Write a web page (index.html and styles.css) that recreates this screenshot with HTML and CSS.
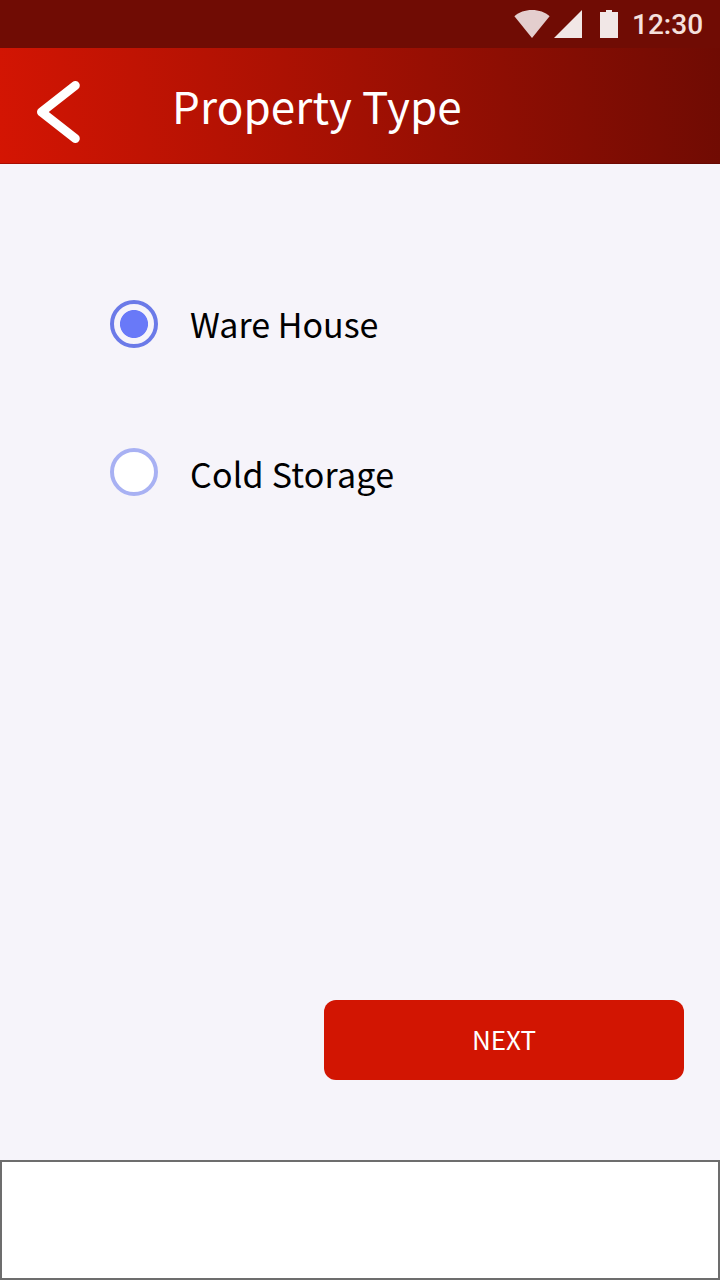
FILE: index.html
```
<!DOCTYPE html>
<html lang="en">
<head>
<meta charset="utf-8">
<title>Property Type</title>
<link rel="stylesheet" href="styles.css">
</head>
<body>
<div class="screen">
  <div class="status-bar">
    <svg class="status-icons" viewBox="0 0 106 48" aria-hidden="true">
      <path fill="#e4cece" d="M0.4 16.2C5 12.2 11 10 18 10s13 2.2 17.6 6.2L18 38z"/>
      <path fill="#f1e7e6" d="M40 38L68 10v28z"/>
      <path fill="#f1e7e6" d="M86 12h6v-2h6v2h6v26H86z"/>
    </svg>
    <span class="clock">12:30</span>
  </div>
  <header class="app-bar">
    <button class="back" aria-label="Back">
      <svg viewBox="0 0 48 68" aria-hidden="true"><path d="M41.3 7.5L7.5 34l33.8 26.5"/></svg>
    </button>
    <h1 class="title">Property Type</h1>
  </header>
  <main class="content">
    <label class="option">
      <span class="radio radio-checked"></span>
      <span class="option-label">Ware House</span>
    </label>
    <label class="option">
      <span class="radio"></span>
      <span class="option-label option-label-second">Cold Storage</span>
    </label>
    <button class="next">NEXT</button>
  </main>
  <footer class="bottom-bar"></footer>
</div>
</body>
</html>
```
FILE: styles.css
```
* { box-sizing: border-box; }
body { margin: 0; font-family: "Noto Sans CJK SC", "Noto Sans", sans-serif; }
button { border: 0; padding: 0; font-family: inherit; }
.screen {
  display: flex;
  flex-direction: column;
  width: 720px;
  height: 1280px;
  background: #f6f4fa;
}
.status-bar {
  display: flex;
  justify-content: flex-end;
  align-items: center;
  height: 48px;
  padding-right: 17px;
  background: #700c04;
}
.status-icons { width: 106px; height: 48px; margin-right: 12px; }
.clock {
  width: 71px;
  padding-top: 2px;
  font: 500 28px/48px Roboto, sans-serif;
  color: #f5e0dd;
  white-space: nowrap;
}
.app-bar {
  display: flex;
  height: 116px;
  padding-left: 34px;
  background: linear-gradient(83deg, #d41503 0%, #6f0b03 100%);
  border-bottom: 1px solid rgba(80, 0, 0, 0.3);
}
.back { width: 48px; height: 68px; margin-top: 30px; background: none; }
.back svg { display: block; width: 48px; height: 68px; }
.back path {
  fill: none;
  stroke: #fff;
  stroke-width: 9;
  stroke-linecap: round;
  stroke-linejoin: round;
}
.title {
  margin: 24px 0 0 90px;
  font-size: 44px;
  font-weight: 400;
  line-height: 66px;
  letter-spacing: 0.1px;
  color: #fff;
  white-space: nowrap;
}
.content {
  display: flex;
  flex-direction: column;
  flex: 1;
  padding: 136px 36px 80px 110px;
}
.option { display: flex; align-items: center; gap: 32px; height: 48px; margin-bottom: 100px; }
.radio {
  width: 48px;
  height: 48px;
  border: 4px solid #a8b1f3;
  border-radius: 50%;
  background: #fff;
}
.radio-checked {
  border-color: #6b7ae8;
  background: radial-gradient(circle, #6979f8 13.6px, #f6f4fa 14.4px);
}
.option-label { font-size: 34px; line-height: 48px; color: #000; white-space: nowrap; }
.option-label-second { padding-top: 4px; letter-spacing: 0.2px; }
.next {
  align-self: flex-end;
  width: 360px;
  height: 80px;
  margin-top: auto;
  padding-bottom: 2px;
  border-radius: 12px;
  background: #d21502;
  color: #fff;
  font-size: 26px;
  line-height: 78px;
}
.bottom-bar { height: 120px; background: #fff; border: 2px solid #6d6d6d; }
```
